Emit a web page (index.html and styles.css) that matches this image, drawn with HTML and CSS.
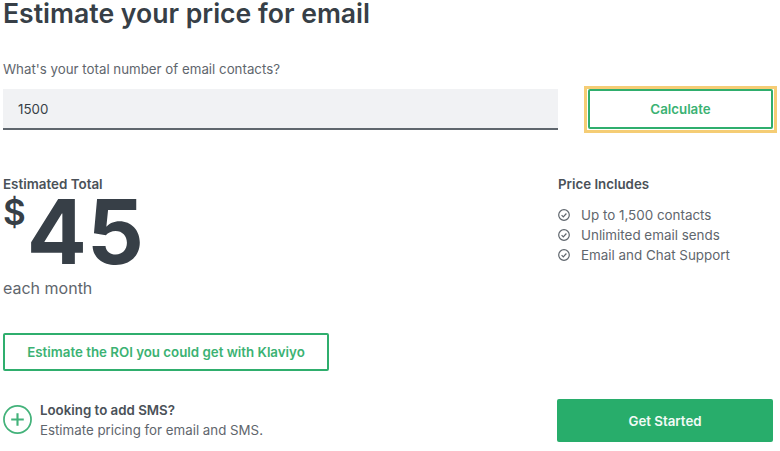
FILE: index.html
```html
<!DOCTYPE html>
<html lang="en">
<head>
    <meta charset="UTF-8">
    <meta name="viewport" content="width=device-width, initial-scale=1.0">
    <title>Estimate your price for email</title>
    <link rel="stylesheet" href="styles.css">
</head>
<body>
    <div class="container">
        <h1 class="title">Estimate your price for email</h1>
        <label class="field-label" for="contacts">What's your total number of email contacts?</label>
        <div class="calc-row">
            <input class="contacts-input" id="contacts" type="text" value="1500">
            <div class="calc-focus">
                <button class="btn btn-calc">Calculate</button>
            </div>
        </div>
        <div class="result-row">
            <div class="estimate">
                <div class="estimate-label">Estimated Total</div>
                <div class="price"><span class="currency">$</span><span class="amount">45</span></div>
                <div class="period">each month</div>
            </div>
            <div class="includes">
                <div class="includes-title">Price Includes</div>
                <ul class="includes-list">
                    <li>
                        <svg class="check" viewBox="0 0 12 12"><circle cx="6" cy="6" r="5.3"/><path d="M3.6 6.1l1.7 1.7 3.1-3.3"/></svg>
                        Up to 1,500 contacts
                    </li>
                    <li>
                        <svg class="check" viewBox="0 0 12 12"><circle cx="6" cy="6" r="5.3"/><path d="M3.6 6.1l1.7 1.7 3.1-3.3"/></svg>
                        Unlimited email sends
                    </li>
                    <li>
                        <svg class="check" viewBox="0 0 12 12"><circle cx="6" cy="6" r="5.3"/><path d="M3.6 6.1l1.7 1.7 3.1-3.3"/></svg>
                        Email and Chat Support
                    </li>
                </ul>
            </div>
        </div>
        <button class="btn btn-roi">Estimate the ROI you could get with Klaviyo</button>
        <div class="bottom-row">
            <div class="sms">
                <svg class="plus" viewBox="0 0 30 30"><circle cx="15" cy="15" r="14"/><path class="plus-mark" d="M15 8.5v13M8.5 15h13"/></svg>
                <div class="sms-text">
                    <div class="sms-title">Looking to add SMS?</div>
                    <div class="sms-sub">Estimate pricing for email and SMS.</div>
                </div>
            </div>
            <button class="btn btn-start">Get Started</button>
        </div>
    </div>
</body>
</html>
```

FILE: styles.css
```css
* {
    margin: 0;
    padding: 0;
    box-sizing: border-box;
}

html,
body {
    width: 100%;
    height: 100%;
    background: #fff;
    overflow: hidden;
}

body {
    font-family: Inter, "Liberation Sans", sans-serif;
    color: #373f47;
}

.container {
    width: 780px;
    height: 451px;
    padding: 0 7px 0 3px;
}

.title {
    height: 26px;
    font-size: 26.6px;
    line-height: 26px;
    font-weight: 600;
}

.field-label {
    display: block;
    margin-top: 33px;
    font-size: 13.3px;
    line-height: 20px;
    color: #5f666d;
}

.calc-row {
    display: flex;
    justify-content: space-between;
    align-items: flex-start;
    margin-top: 10px;
}

.contacts-input {
    width: 555px;
    height: 41px;
    padding: 0 15px;
    background: #f1f2f4;
    border: none;
    border-bottom: 2px solid #5f666d;
    font-family: inherit;
    font-size: 13.3px;
    color: #373f47;
    outline: none;
}

.btn {
    font-family: inherit;
    font-weight: 600;
    font-size: 13.3px;
    border-radius: 2px;
    background: #fff;
    color: #3bb273;
    border: 2px solid #2fae6d;
    cursor: pointer;
}

/* 焦点框是直角的，所以单独包一层 */
.calc-focus {
    margin: -3px -4px -4px 0;
    padding: 0 1px 1px 1px;
    border: 3px solid #f5cd75;
}

.btn-calc {
    display: block;
    width: 185px;
    height: 40px;
}

.result-row {
    display: flex;
    justify-content: space-between;
    margin-top: 44px;
}

.estimate-label {
    font-size: 13.4px;
    line-height: 20px;
    font-weight: 600;
    color: #4a5158;
}

.price {
    display: flex;
    height: 79px;
    margin-top: -3px;
}

.currency {
    font-size: 35px;
    line-height: 43px;
    font-weight: 600;
}

.amount {
    margin-left: 1px;
    font-size: 89px;
    line-height: 82px;
    font-weight: 700;
}

.period {
    margin-top: 8px;
    font-size: 16px;
    line-height: 20px;
    color: #5f666d;
}

.includes {
    width: 215px;
}

.includes-title {
    font-size: 13.3px;
    line-height: 20px;
    font-weight: 600;
    color: #4a5158;
}

.includes-list {
    margin-top: 11px;
    list-style: none;
}

.includes-list li {
    display: flex;
    align-items: center;
    gap: 11px;
    height: 20px;
    font-size: 13.4px;
    color: #5f666d;
}

.check {
    width: 12px;
    height: 12px;
    fill: none;
    stroke: #5f666d;
    stroke-width: 1.2;
}

.btn-roi {
    display: block;
    width: 326px;
    height: 38px;
    margin-top: 35px;
}

.bottom-row {
    display: flex;
    justify-content: space-between;
    align-items: center;
    margin-top: 28px;
}

.sms {
    display: flex;
    align-items: center;
    gap: 8px;
    padding-bottom: 2px;
}

.plus {
    width: 29px;
    height: 29px;
    fill: none;
    stroke: #43b27a;
    stroke-width: 1.8;
}

.plus-mark {
    stroke-width: 2.2;
}

.sms-title {
    font-size: 13.3px;
    line-height: 20px;
    font-weight: 600;
    color: #4a5158;
}

.sms-sub {
    font-size: 13.3px;
    line-height: 20px;
    color: #5f666d;
}

.btn-start {
    width: 216px;
    height: 43px;
    background: #28ad6b;
    border: none;
    color: #f2faf6;
}
```
